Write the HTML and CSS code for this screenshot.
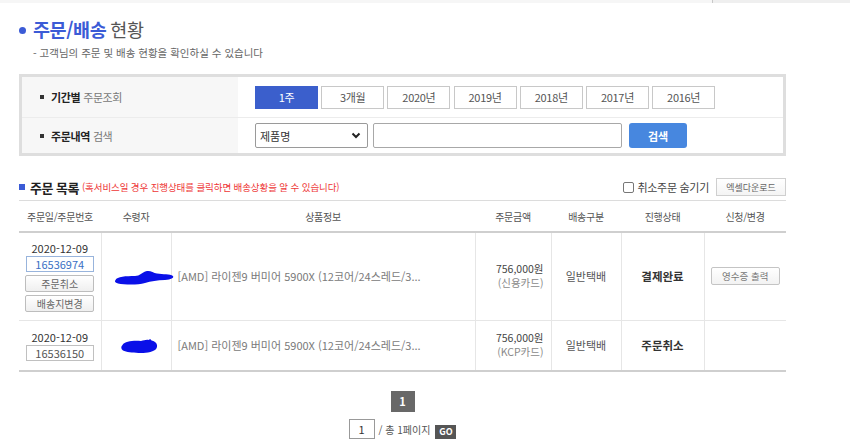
FILE: index.html
```html
<!DOCTYPE html>
<html lang="ko">
<head>
<meta charset="utf-8">
<title>주문/배송 현황</title>
<link rel="stylesheet" href="styles.css">
</head>
<body>
<div class="topbar"><div class="tb-left"></div><div class="tb-right"></div></div>
<div class="wrap">
  <h1 class="title"><span class="dot"></span><span class="t-blue">주문/배송</span><span class="t-gray">현황</span></h1>
  <p class="sub">- 고객님의 주문 및 배송 현황을 확인하실 수 있습니다</p>

  <div class="search">
    <div class="srow r1">
      <div class="slabel"><span class="sq"></span><b>기간별</b><span class="lg">주문조회</span></div>
      <div class="sctrl periods">
        <button class="pbtn on">1주</button>
        <button class="pbtn">3개월</button>
        <button class="pbtn">2020년</button>
        <button class="pbtn">2019년</button>
        <button class="pbtn">2018년</button>
        <button class="pbtn">2017년</button>
        <button class="pbtn">2016년</button>
      </div>
    </div>
    <div class="srow r2">
      <div class="slabel"><span class="sq"></span><b>주문내역</b><span class="lg">검색</span></div>
      <div class="sctrl">
        <div class="sel"><span>제품명</span><svg width="10" height="7" viewBox="0 0 10 7"><path d="M1.5 1.5 L5 5 L8.5 1.5" fill="none" stroke="#222" stroke-width="2"/></svg></div>
        <div class="inp"></div>
        <button class="sbtn">검색</button>
      </div>
    </div>
  </div>

  <div class="listhead">
    <div class="lh-left"><span class="bsq"></span><b class="lh-title">주문 목록</b><span class="note">(혹서비스일 경우 진행상태를 클릭하면 배송상황을 알 수 있습니다)</span></div>
    <div class="lh-right"><span class="chk"></span><span class="chk-label">취소주문 숨기기</span><button class="xbtn">엑셀다운로드</button></div>
  </div>

  <table class="orders">
    <colgroup><col class="c1"><col class="c2"><col class="c3"><col class="c4"><col class="c5"><col class="c6"><col class="c7"></colgroup>
    <thead>
      <tr><th>주문일/주문번호</th><th>수령자</th><th>상품정보</th><th>주문금액</th><th>배송구분</th><th>진행상태</th><th>신청/변경</th></tr>
    </thead>
    <tbody>
      <tr class="row1">
        <td class="cdate">
          <div class="date">2020-12-09</div>
          <div class="ono blue">16536974</div>
          <button class="mini">주문취소</button>
          <button class="mini">배송지변경</button>
        </td>
        <td class="crecv"><svg class="blob1" width="60" height="16" viewBox="0 0 60 16"><path d="M1.5,11 C3,7.5 12,7 21,7 C26,6.8 28,3.5 32,2.2 C36,1 39,3.5 43,4.6 C49,5.6 56,5 59,7 C60.2,9 57,10.6 51,11 C43,11.4 37,12 31,14 C23,16.2 10,15.6 4,14.4 C0.8,13.6 0.6,12.4 1.5,11 Z" fill="#0a10e8"/></svg></td>
        <td class="cprod">[AMD] 라이젠9 버미어 5900X (12코어/24스레드/3...</td>
        <td class="camt"><div class="amt">756,000원</div><div class="pay">(신용카드)</div></td>
        <td class="cship">일반택배</td>
        <td class="cstat">결제완료</td>
        <td class="cact"><button class="rbtn">영수증 출력</button></td>
      </tr>
      <tr class="row2">
        <td class="cdate">
          <div class="date">2020-12-09</div>
          <div class="ono">16536150</div>
        </td>
        <td class="crecv"><svg class="blob2" width="38" height="15" viewBox="0 0 38 15"><path d="M2.5,6 C5,2.2 13,1.4 21,2 C24,1.6 26,0.4 28.5,1 C29.5,0 31,0 31.5,1.4 C34,2 36.5,3 37,6 C37.6,9.6 35,12.4 28,13.4 C20,14.4 8,14.2 3,11.6 C0.8,10 0.8,7.6 2.5,6 Z" fill="#0a10e8"/></svg></td>
        <td class="cprod">[AMD] 라이젠9 버미어 5900X (12코어/24스레드/3...</td>
        <td class="camt"><div class="amt">756,000원</div><div class="pay">(KCP카드)</div></td>
        <td class="cship">일반택배</td>
        <td class="cstat">주문취소</td>
        <td class="cact"></td>
      </tr>
    </tbody>
  </table>

  <div class="pager">
    <span class="pnum">1</span>
  </div>
  <div class="pgo">
    <span class="pinp">1</span><span class="ptxt">/ 총 1페이지</span><button class="gobtn">GO</button>
  </div>
</div>
</body>
</html>
```

FILE: styles.css
```css
* { box-sizing: border-box; }
html, body { margin: 0; padding: 0; background: #fff; }
body {
  font-family: "Noto Sans CJK KR", "Noto Sans", "Liberation Sans", sans-serif;
  color: #333;
  width: 850px;
  height: 440px;
  overflow: hidden;
}
button { font-family: inherit; cursor: pointer; margin: 0; }

.topbar { display: flex; height: 3px; }
.tb-left { width: 713px; background: #f6f6f6; border-right: 1px solid #c8c8c8; }
.tb-right { flex: 1; background: #efefef; }

.wrap { padding-left: 19px; width: 786px; }

.title {
  margin: 14px 0 0 0;
  height: 24px;
  display: flex;
  align-items: center;
  font-size: 18.5px;
  line-height: 24px;
  letter-spacing: -0.4px;
}
.dot { width: 7px; height: 7px; border-radius: 50%; background: #3b5bd6; margin-right: 7px; margin-top: 2px; }
.t-blue { color: #3b5bd6; font-weight: 700; }
.t-gray { color: #555; font-weight: 400; margin-left: 4px; }

.sub {
  margin: 5px 0 0 14px;
  font-size: 10.5px;
  line-height: 14px;
  color: #666;
  letter-spacing: 0;
}

.search { margin-top: 14px; border: 3px solid #dedede; width: 767px; }
.srow { display: flex; }
.srow.r1 { height: 40px; }
.srow.r2 { height: 36px; border-top: 1px solid #ececec; }
.slabel {
  width: 216px;
  background: #f7f7f7;
  display: flex;
  align-items: center;
  padding-left: 18px;
  font-size: 11px;
  color: #222;
  letter-spacing: -0.4px;
}
.slabel b { font-weight: 700; margin-right: 3px; }
.sq { width: 4px; height: 4px; background: #333; margin-right: 7px; }
.lg { color: #777; }
.sctrl { display: flex; align-items: center; padding-left: 17px; }
.periods { gap: 3.2px; }
.pbtn {
  width: 63px;
  height: 23px;
  border: 1px solid #c8c8c8;
  background: #fff;
  color: #555;
  font-size: 11px;
  padding: 0;
  letter-spacing: -0.3px;
}
.pbtn.on { background: #3b5fcc; border-color: #3b5fcc; color: #fff; }
.sel {
  width: 113px;
  height: 25px;
  border: 1px solid #9a9a9a;
  border-radius: 2px;
  display: flex;
  align-items: center;
  justify-content: space-between;
  padding: 0 6px 0 4px;
  font-size: 11px;
  color: #333;
}
.inp { width: 249px; height: 25px; border: 1px solid #a8a8a8; border-radius: 2px; margin-left: 5px; }
.sbtn {
  width: 58px;
  height: 25px;
  margin-left: 7px;
  border: none;
  border-radius: 3px;
  background: #4787df;
  color: #fff;
  font-weight: 700;
  font-size: 11px;
}

.listhead {
  margin-top: 22px;
  height: 18px;
  width: 767px;
  display: flex;
  align-items: center;
  justify-content: space-between;
}
.lh-left { display: flex; align-items: center; }
.bsq { width: 6px; height: 6px; background: #3b5bd6; margin-right: 5px; }
.lh-title { font-size: 13px; font-weight: 700; color: #222; letter-spacing: -0.5px; margin-right: 3px; }
.note { font-size: 9.5px; color: #ee3636; letter-spacing: -0.1px; }
.lh-right { display: flex; align-items: center; }
.chk { width: 11px; height: 11px; border: 1px solid #777; border-radius: 2px; margin-right: 3px; }
.chk-label { font-size: 11px; color: #444; letter-spacing: -0.3px; margin-right: 7px; }
.xbtn {
  width: 70px;
  height: 18px;
  border: 1px solid #cfcfcf;
  background: linear-gradient(#fff, #f4f4f4);
  color: #666;
  font-size: 9px;
  padding: 0;
}

.orders {
  margin-top: 4px;
  width: 767px;
  border-collapse: collapse;
  table-layout: fixed;
  font-size: 11px;
}
.c1 { width: 82px; } .c2 { width: 70px; } .c3 { width: 304px; } .c4 { width: 76px; }
.c5 { width: 70px; } .c6 { width: 83px; } .c7 { width: 82px; }
.orders th {
  height: 31px;
  padding: 0;
  padding-top: 1px;
  border-top: 1px solid #dcdcdc;
  border-bottom: 2px solid #cfcfcf;
  font-weight: 400;
  font-size: 10px;
  color: #555;
  letter-spacing: -0.3px;
  background: #fff;
}
.orders td {
  padding: 0;
  border-left: 1px solid #e6e6e6;
  text-align: center;
  vertical-align: middle;
  color: #555;
}
.orders td:first-child { border-left: none; }
.row1 td { height: 89px; border-bottom: 1px solid #e6e6e6; }
.row2 td { height: 50px; border-bottom: 2px solid #cfcfcf; }

.cdate { padding-top: 1px !important; }
.date { font-size: 11px; color: #333; line-height: 14px; margin-bottom: 1px; }
.ono {
  width: 68px;
  height: 16px;
  margin: 0 auto;
  border: 1px solid #c0c0c0;
  line-height: 14px;
  font-size: 11px;
  color: #555;
}
.ono.blue { border-color: #98b4dc; color: #3a6fc4; }
.mini {
  display: block;
  width: 69px;
  height: 17px;
  margin: 3px auto 0;
  border: 1px solid #bdbdbd;
  border-radius: 2px;
  background: linear-gradient(#fff, #efefef);
  color: #666;
  font-size: 10px;
  padding: 0;
  line-height: 15px;
}
.crecv { text-align: left !important; }
.blob1 { display: block; margin-left: 12px; margin-top: 2px; overflow: visible; position: relative; z-index: 1; }
.blob2 { display: block; margin-left: 18px; margin-top: 3px; }
.cprod { text-align: left !important; padding-left: 6px !important; color: #7a7a7a !important; white-space: nowrap; letter-spacing: 0; }
.camt { text-align: right !important; padding-right: 7px !important; color: #444 !important; }
.amt, .pay { font-size: 10.5px; line-height: 14px; height: 14px; overflow: visible; }
.pay { color: #8a8a8a; }
.cship { color: #555; }
.cstat { font-weight: 700; color: #333 !important; font-size: 11.5px; }
.rbtn {
  width: 69px;
  height: 18px;
  border: 1px solid #c4c4c4;
  border-radius: 2px;
  background: linear-gradient(#fff, #f2f2f2);
  color: #777;
  font-size: 9.5px;
  padding: 0;
}

.pager { width: 767px; display: flex; justify-content: center; margin-top: 19px; }
.pnum {
  width: 24px;
  height: 21px;
  background: #686868;
  color: #fff;
  font-weight: 700;
  font-size: 11px;
  line-height: 21px;
  text-align: center;
}
.pgo { width: 767px; display: flex; justify-content: center; align-items: flex-start; margin-top: 7px; }
.pinp {
  width: 26px;
  height: 20px;
  border: 1px solid #999;
  font-size: 11px;
  line-height: 18px;
  text-align: center;
  color: #333;
}
.ptxt { font-size: 10px; color: #555; margin: 4px 5px 0 4px; line-height: 14px; }
.gobtn {
  margin-top: 6px;
  width: 21px;
  height: 14px;
  background: #555;
  color: #fff;
  border: none;
  font-weight: 700;
  font-size: 9px;
  padding: 0;
}
```
